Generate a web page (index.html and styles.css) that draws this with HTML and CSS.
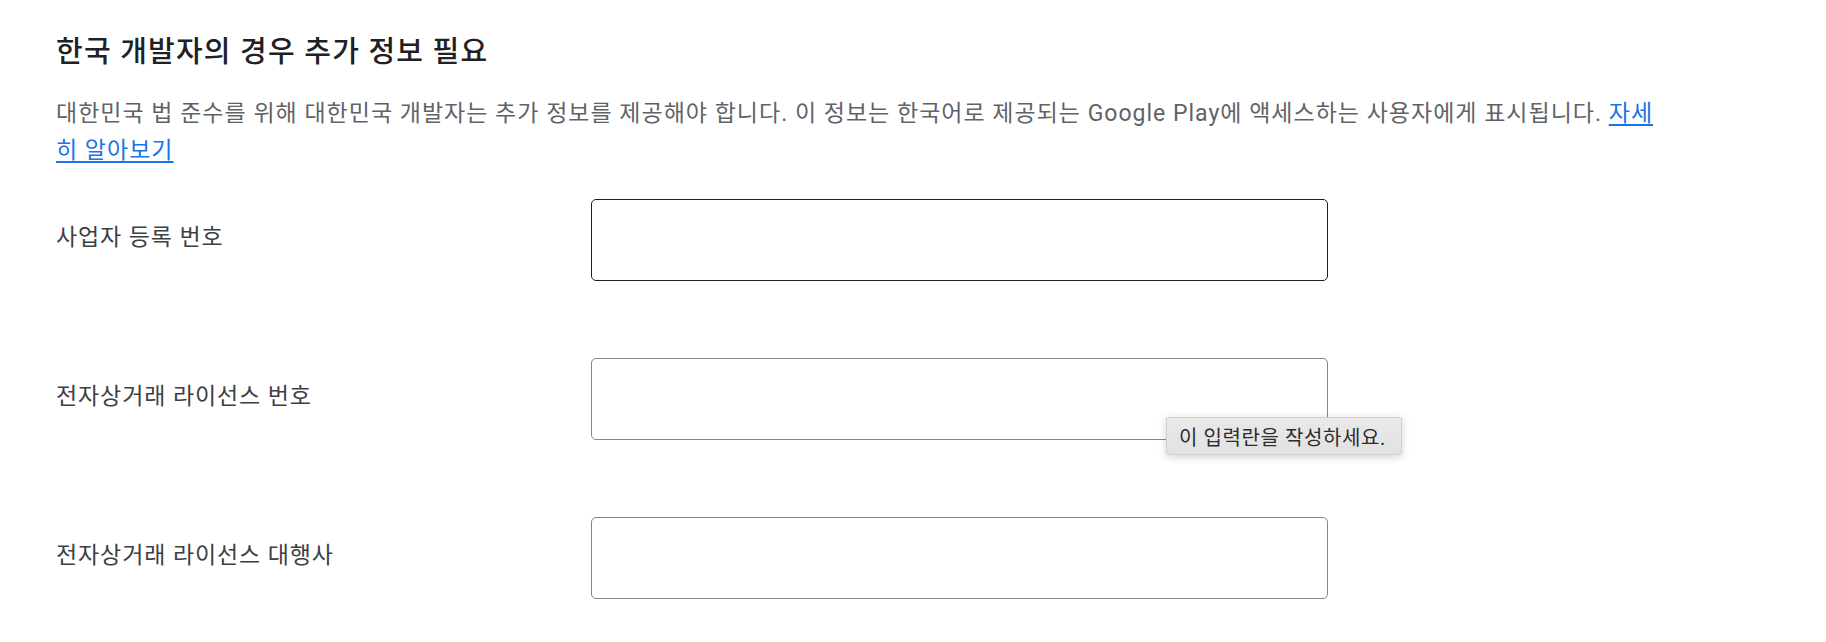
FILE: index.html
```html
<!DOCTYPE html>
<html lang="ko">
<head>
<meta charset="utf-8">
<title>한국 개발자의 경우 추가 정보 필요</title>
<link rel="stylesheet" href="styles.css">
</head>
<body>
<section class="section">
  <h2 class="title">한국 개발자의 경우 추가 정보 필요</h2>
  <p class="desc">대한민국 법 준수를 위해 대한민국 개발자는 추가 정보를 제공해야 합니다. 이 정보는 한국어로 제공되는 Google Play에 액세스하는 사용자에게 표시됩니다. <a class="link" href="#">자세히 알아보기</a></p>
  <div class="form">
    <div class="row">
      <label class="label" for="f1">사업자 등록 번호</label>
      <div class="field"><input id="f1" class="input input-active" type="text"></div>
    </div>
    <div class="row">
      <label class="label" for="f2">전자상거래 라이선스 번호</label>
      <div class="field">
        <input id="f2" class="input" type="text">
        <div class="tooltip">이 입력란을 작성하세요.</div>
      </div>
    </div>
    <div class="row">
      <label class="label" for="f3">전자상거래 라이선스 대행사</label>
      <div class="field"><input id="f3" class="input" type="text"></div>
    </div>
  </div>
</section>
</body>
</html>
```
FILE: styles.css
```css
html, body {
  margin: 0;
  padding: 0;
  background: #ffffff;
}
body {
  font-family: Roboto, "Noto Sans CJK KR", "Noto Sans", sans-serif;
  color: #202124;
}
.section {
  padding: 34px 0 0 56px;
  width: 1612px;
}
.title {
  margin: 0;
  font-size: 29px;
  line-height: 36px;
  font-weight: 500;
  letter-spacing: 1.2px;
  color: #202124;
}
.desc {
  margin: 25px 0 0;
  font-size: 23px;
  line-height: 37px;
  letter-spacing: 1px;
  word-break: break-all;
  color: #5f6368;
}
.link {
  color: #1a73e8;
  text-decoration: underline;
  text-underline-offset: 3px;
}
.form {
  margin-top: 30px;
  display: flex;
  flex-direction: column;
  gap: 77px;
}
.row {
  display: grid;
  grid-template-columns: 535px 737px;
  align-items: center;
}
.label {
  font-size: 23px;
  line-height: 30px;
  letter-spacing: 0.9px;
  color: #3c4043;
  margin-top: -5px;
}
.field {
  position: relative;
  height: 82px;
}
.input {
  box-sizing: border-box;
  width: 737px;
  height: 82px;
  margin: 0;
  border: 1px solid #80868b;
  border-radius: 5px;
  background: #fff;
  font: inherit;
  outline: none;
  display: block;
}
.input-active {
  border-color: #202124;
}
.tooltip {
  position: absolute;
  left: 575px;
  top: 59px;
  box-sizing: border-box;
  width: 236px;
  height: 38px;
  padding: 0 0 0 12px;
  display: flex;
  align-items: center;
  background: linear-gradient(#e9e9e9, #e2e2e2);
  border: 1px solid #d0d0d0;
  border-radius: 2px;
  box-shadow: 0 2px 8px rgba(0, 0, 0, 0.18);
  font-size: 20px;
  letter-spacing: 0.6px;
  color: #2c2c2c;
  white-space: nowrap;
}
```
